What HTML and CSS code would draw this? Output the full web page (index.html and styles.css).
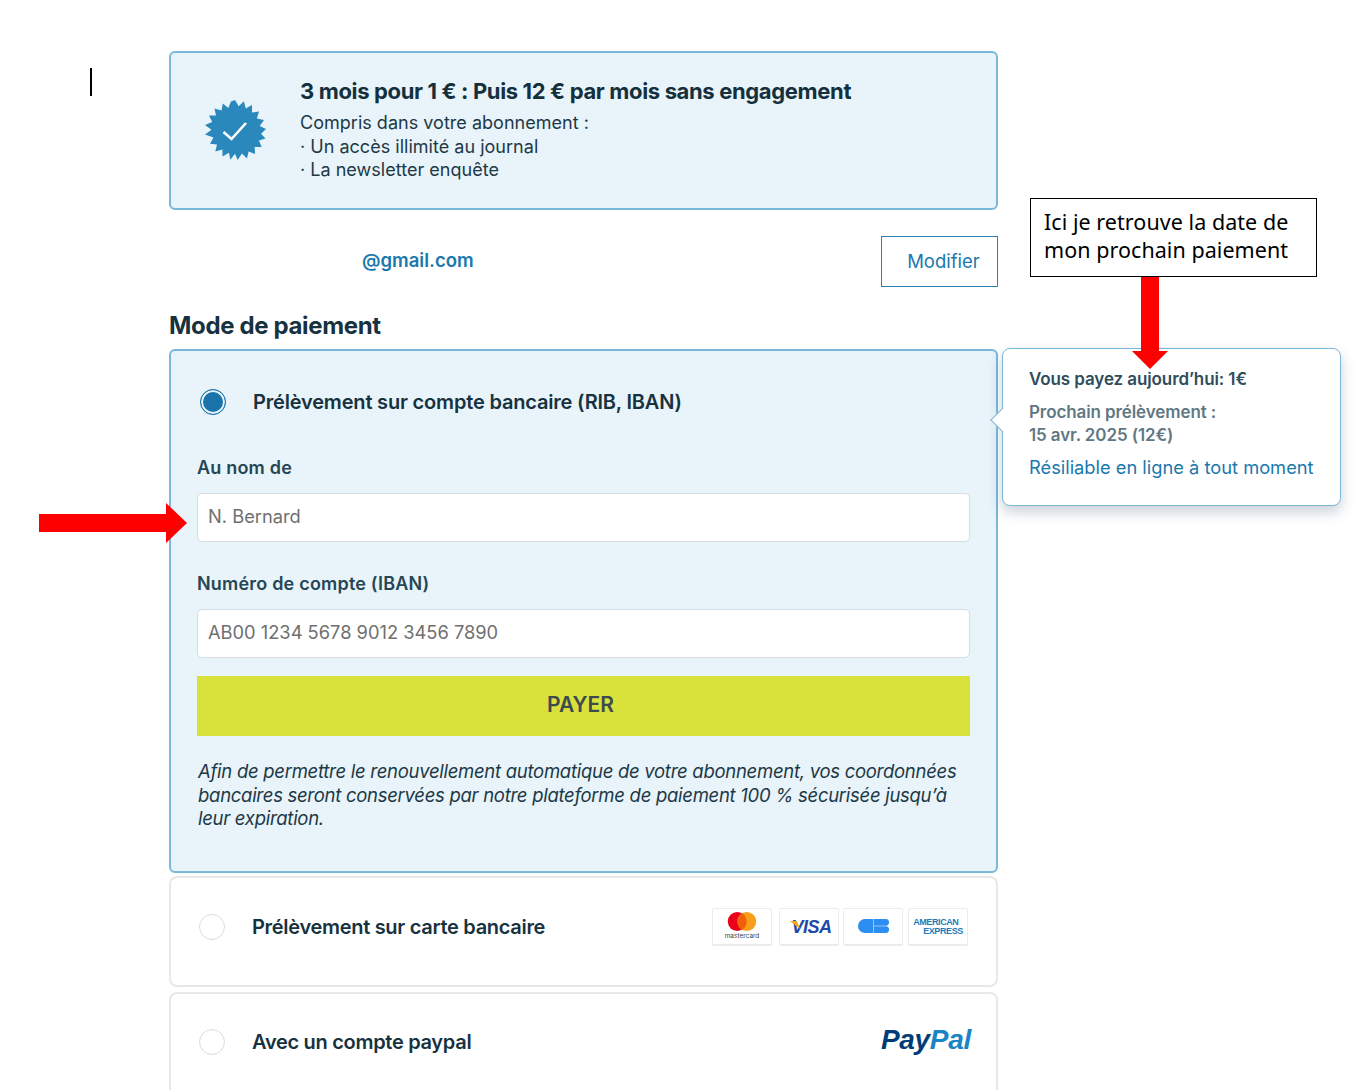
FILE: index.html
```html
<!DOCTYPE html>
<html lang="fr">
<head>
<meta charset="utf-8">
<title>Paiement</title>
<link rel="stylesheet" href="styles.css">
</head>
<body>
<div class="caret"></div>
<main class="column">
  <section class="offer">
    <svg class="badge" viewBox="-31 -31 62 62" width="62" height="62"><polygon fill="#2a88bd" points="0,-31 3.7,-24.7 8.9,-29.7 10.8,-22.5 17,-25.9 17,-18.4 24,-19.5 21.9,-12.4 29,-11.1 24.7,-5 31,-2 26,2.7 30.5,7.5 24,9.6 26.6,16 19.6,15.9 20.1,23 13.6,20.5 12,27.6 7,22.6 2.6,29 0,22.8 -4.7,28.7 -6,21.8 -12.5,25.6 -12.6,18.5 -19.7,20.5 -18,13.5 -25,12.7 -21.5,6.6 -30,3.5 -23.5,-1.200 -30,-6 -22.8,-9 -26,-15.5 -19,-15.5 -20.5,-22.5 -13.5,-20.5 -12.2,-27.5 -6.7,-23 -4,-29.5"/><path d="M-11.5 1 L-3.5 8 L11 -8" fill="none" stroke="#fff" stroke-width="2.600"/></svg>
    <div class="offer-text">
      <h2 class="offer-title">3 mois pour 1 € : Puis 12 € par mois sans engagement</h2>
      <p class="offer-line">Compris dans votre abonnement :</p>
      <p class="offer-line">· Un accès illimité au journal</p>
      <p class="offer-line">· La newsletter enquête</p>
    </div>
  </section>

  <div class="account">
    <span class="email">@gmail.com</span>
    <span class="modify">Modifier</span>
  </div>

  <h1 class="section-title">Mode de paiement</h1>

  <section class="method-open">
    <div class="method-head">
      <span class="radio radio-on"></span>
      <strong class="method-label">Prélèvement sur compte bancaire (RIB, IBAN)</strong>
    </div>
    <label class="field-label">Au nom de</label>
    <div class="input">N. Bernard</div>
    <label class="field-label field-label-2">Numéro de compte (IBAN)</label>
    <div class="input">AB00 1234 5678 9012 3456 7890</div>
    <div class="pay">PAYER</div>
    <p class="notice">Afin de permettre le renouvellement automatique de votre abonnement, vos coordonnées bancaires seront conservées par notre plateforme de paiement 100 % sécurisée jusqu’à leur expiration.</p>
  </section>

  <section class="method method-card">
    <span class="radio"></span>
    <strong class="method-label method-grow">Prélèvement sur carte bancaire</strong>
    <div class="cards">
      <span class="card-logo">
        <svg width="30" height="19" viewBox="0 0 30 20"><circle cx="10" cy="10" r="10" fill="#eb001b"/><circle cx="20" cy="10" r="10" fill="#f79e1b"/><path d="M15 1.340a10 10 0 0 1 0 17.320a10 10 0 0 1 0-17.320z" fill="#f0600a"/></svg>
        <span class="mc-text">mastercard</span>
      </span>
      <span class="card-logo card-logo-low"><svg class="visa-tick" width="10" height="8" viewBox="0 0 10 8"><path d="M0 0h7l3 8z" fill="#f7a823"/></svg><span class="visa">VISA</span></span>
      <span class="card-logo">
        <svg width="31" height="14" viewBox="0 0 31 14"><path d="M15.500 0H7a7 7 0 0 0 0 14h8.500z" fill="#2b8ef0"/><path d="M16 0h12a3.400 3.400 0 0 1 3 3.400a3.400 3.400 0 0 1-3 3.300H16zM16 7.300h12a3.300 3.300 0 0 1 3 3.400a3.300 3.300 0 0 1-3 3.300H16z" fill="#2b8ef0"/></svg>
      </span>
      <span class="card-logo"><span class="amex">AMERICAN<br><span class="amex-2">EXPRESS</span></span></span>
    </div>
  </section>

  <section class="method method-paypal">
    <span class="radio"></span>
    <strong class="method-label method-grow">Avec un compte paypal</strong>
    <span class="paypal"><span class="pay-dark">Pay</span><span class="pay-light">Pal</span></span>
  </section>

  <aside class="tooltip">
    <span class="tip-arrow"></span>
    <p class="tip-today">Vous payez aujourd’hui: 1€</p>
    <p class="tip-next">Prochain prélèvement :<br>15 avr. 2025 (12€)</p>
    <p class="tip-link">Résiliable en ligne à tout moment</p>
  </aside>
</main>

<div class="callout">Ici je retrouve la date de mon prochain paiement</div>
<svg class="arrow-down" width="36" height="92" viewBox="0 0 36 92"><polygon points="9,0 27,0 27,74 36,74 18,92 0,74 9,74" fill="#ff0000"/></svg>
<svg class="arrow-right" width="148" height="40" viewBox="0 0 148 40"><polygon points="0,11 127,11 127,0 148,20 127,40 127,29 0,29" fill="#ff0000"/></svg>
</body>
</html>
```
FILE: styles.css
```css
* { box-sizing: border-box; }
html, body { margin: 0; height: 1090px; overflow: hidden; background: #fff; }
body { position: relative; font-family: Inter, Roboto, "Liberation Sans", sans-serif; color: #17323f; }
p, h1, h2 { margin: 0; }

.caret { position: absolute; left: 90px; top: 68px; width: 2px; height: 28px; background: #000; }

.column { position: relative; width: 829px; margin-left: 169px; padding-top: 51px; }

.offer { display: flex; align-items: center; height: 159px; padding-left: 33px; background: #e8f3fa; border: 2px solid #7ab7d9; border-radius: 6px; }
.badge { flex: none; }
.offer-text { margin-left: 34px; margin-top: -2px; }
.offer-title { font-size: 22px; line-height: 28px; font-weight: 700; letter-spacing: -.35px; color: #14303d; margin-bottom: 6px; white-space: nowrap; }
.offer-line { font-size: 18px; line-height: 23.500px; color: #1d3946; letter-spacing: .02px; }

.account { display: flex; justify-content: space-between; align-items: center; height: 51px; margin-top: 26px; padding-left: 193px; }
.email { font-size: 18.500px; font-weight: 600; color: #1a78ad; margin-top: -3px; }
.modify { display: flex; align-items: center; justify-content: center; width: 117px; height: 51px; border: 1px solid #2a80b0; font-size: 18.500px; color: #1a78ad; padding-left: 8px; padding-bottom: 1px; }

.section-title { font-size: 24px; line-height: 30px; font-weight: 700; color: #17323f; margin-top: 24px; margin-bottom: 8px; letter-spacing: -.35px; }

.method-open { height: 524px; padding: 0 26px; background: #e8f3fa; border: 2px solid #7ab7d9; border-radius: 6px; }
.method-head { display: flex; align-items: center; height: 100px; padding: 2px 0 0 3px; }
.radio { flex: none; width: 26px; height: 26px; border-radius: 50%; background: #fff; border: 1px solid #d8dee2; }
.radio-on { background: #1a74aa; border: 1px solid #1a74aa; box-shadow: inset 0 0 0 2px #e8f3fa; }
.method-label { font-size: 20px; font-weight: 600; color: #17323f; margin-left: 27px; letter-spacing: -.18px; white-space: nowrap; }
.field-label { display: block; font-size: 18px; line-height: 24px; font-weight: 600; color: #254655; margin-top: 5px; letter-spacing: .2px; }
.field-label-2 { margin-top: 30px; }
.input { height: 49px; margin-top: 13px; padding: 0 0 3px 10px; display: flex; align-items: center; background: #fff; border: 1px solid #d6dee3; border-radius: 5px; font-size: 18.300px; color: #6f6f6f; }
.pay { display: flex; align-items: center; justify-content: center; height: 60px; margin-top: 18px; padding: 0 6px 4px 0; background: #d9e23a; font-size: 21px; font-weight: 600; color: #3d4b4f; }
.notice { margin-top: 24px; padding-left: 1px; width: 770px; font-size: 18.500px; line-height: 23.500px; font-style: italic; color: #1d3946; letter-spacing: -.28px; }

.method { display: flex; align-items: center; padding: 0 28px 10px 28px; background: #fff; border: 2px solid #e8e8e8; border-radius: 8px; }
.method .method-label { margin-left: 27px; letter-spacing: -.3px; }
.method-grow { flex: 1; }
.method-card { height: 111px; margin-top: 3px; }
.method-paypal { height: 110px; margin-top: 5px; }

.cards { display: flex; gap: 5px; }
.card-logo { position: relative; display: flex; flex-direction: column; align-items: center; justify-content: center; width: 60px; height: 38px; background: #fff; border: 1px solid #ececec; border-bottom-width: 2px; border-radius: 2px; }
.card-logo-low { margin-left: 2px; margin-right: -1px; }
.mc-text { font-size: 6.500px; line-height: 8px; color: #444; margin-top: 1px; }
.visa-tick { position: absolute; left: 10px; top: 12px; }
.visa { font-family: "Liberation Sans", sans-serif; font-size: 18px; font-weight: 700; font-style: italic; color: #2149a8; letter-spacing: -.5px; margin: 3px 0 0 5px; }
.amex { font-family: "Liberation Sans", sans-serif; font-size: 9px; line-height: 9px; font-weight: 700; color: #1e7bb8; letter-spacing: -.4px; margin-top: 2px; }
.amex-2 { margin-left: 10px; }
.paypal { font-family: "Liberation Sans", sans-serif; font-size: 28px; font-weight: 700; font-style: italic; letter-spacing: -.3px; margin-right: -3px; margin-top: -4px; }
.pay-dark { color: #003d78; }
.pay-light { color: #1a84c4; }

.tooltip { position: absolute; left: 833px; top: 348px; width: 339px; height: 158px; padding: 19px 26px; background: #fff; border: 1px solid #7ab7d9; border-radius: 8px; box-shadow: 0 6px 14px rgba(60, 90, 110, .28); }
.tip-arrow { position: absolute; left: -9px; top: 62px; width: 18px; height: 18px; background: #fff; border-left: 1px solid #7ab7d9; border-bottom: 1px solid #7ab7d9; transform: rotate(45deg); }
.tip-today { font-size: 17px; line-height: 22px; font-weight: 600; color: #2f4d5c; letter-spacing: -.1px; }
.tip-next { margin-top: 11px; font-size: 17px; line-height: 23px; font-weight: 600; color: #617884; letter-spacing: -.1px; }
.tip-link { margin-top: 8px; font-size: 18.300px; line-height: 24px; color: #1a78ad; white-space: nowrap; }

.callout { position: absolute; left: 1030px; top: 198px; width: 287px; height: 79px; padding: 9px 13px; background: #fff; border: 1px solid #000; font-family: "Noto Sans", sans-serif; font-size: 21.500px; line-height: 28px; letter-spacing: .05px; color: #000; }
.arrow-down { position: absolute; left: 1132px; top: 277px; }
.arrow-right { position: absolute; left: 39px; top: 503px; }
```
